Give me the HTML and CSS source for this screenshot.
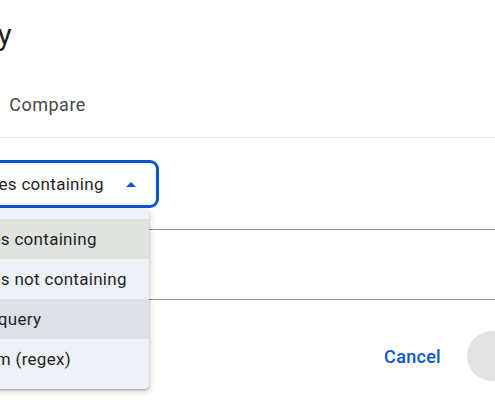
FILE: index.html
```html
<!DOCTYPE html>
<html lang="en">
<head>
<meta charset="utf-8">
<title>Query</title>
<link rel="stylesheet" href="styles.css">
</head>
<body>
<div class="dialog">
  <h1 class="title">Query</h1>
  <div class="tabs">
    <div class="tab tab-active">Filter</div>
    <div class="tab">Compare</div>
  </div>
  <div class="content">
    <div class="select-wrap">
      <div class="select">
        <span class="select-value">Queries containing</span>
        <svg class="select-arrow" width="10" height="5" viewBox="0 0 10 5"><polygon points="0,5 5,0 10,5" fill="#0b57d0"/></svg>
      </div>
      <ul class="menu">
        <li class="menu-item menu-item-selected">Queries containing</li>
        <li class="menu-item">Queries not containing</li>
        <li class="menu-item menu-item-hover">Exact query</li>
        <li class="menu-item">Custom (regex)</li>
      </ul>
    </div>
    <div class="field field-first"></div>
    <div class="field field-second"></div>
  </div>
  <div class="actions">
    <button class="btn btn-text">Cancel</button>
    <button class="btn btn-filled">Apply</button>
  </div>
</div>
</body>
</html>
```
FILE: styles.css
```css
html, body {
  margin: 0;
  padding: 0;
  background: #ffffff;
}
body {
  width: 495px;
  height: 400px;
  overflow: hidden;
  font-family: Roboto, "Liberation Sans", sans-serif;
  color: #1f1f1f;
}
.dialog {
  box-sizing: border-box;
  width: 656px;
  margin-left: -77px;
  padding: 0 24px;
}
.title {
  margin: 15px 0 0 -13px;
  font-size: 30px;
  line-height: 40px;
  font-weight: 400;
  color: #1f1f1f;
}
.tabs {
  display: flex;
  gap: 19px;
  margin: 26px -24px 0;
  padding: 0 24px 8px;
  border-bottom: 1px solid #e3e3e3;
}
.tab {
  height: 48px;
  line-height: 48px;
  font-size: 18px;
  letter-spacing: 0.5px;
  color: #444746;
}
.content {
  padding-top: 22px;
}
.select-wrap {
  position: relative;
  width: 212px;
}
.select {
  box-sizing: border-box;
  height: 48px;
  border: 3px solid #0b57d0;
  border-radius: 9px;
  display: flex;
  align-items: center;
  padding: 0 20px 0 7px;
  font-size: 17px;
  letter-spacing: 0.3px;
  color: #1f1f1f;
}
.select-value {
  flex: 1;
  white-space: nowrap;
}
.select-arrow {
  display: block;
}
.menu {
  position: absolute;
  top: calc(100% + 2px);
  left: 0;
  width: 202px;
  box-sizing: border-box;
  margin: 0;
  padding: 9px 0 10px;
  list-style: none;
  background: #eef2f8;
  border-radius: 4px;
  box-shadow: 0 1px 2px rgba(0,0,0,0.3), 0 2px 6px 2px rgba(0,0,0,0.12);
  z-index: 2;
}
.menu-item {
  height: 40px;
  line-height: 40px;
  padding: 0 3px;
  font-size: 17px;
  letter-spacing: 0.3px;
  color: #1f1f1f;
  white-space: nowrap;
}
.menu-item-selected {
  background: #e1e3e1;
}
.menu-item-hover {
  background: #dde1e7;
}
.field {
  border-bottom: 1px solid #8f9190;
}
.field-first {
  height: 21px;
}
.field-second {
  height: 69px;
}
.actions {
  display: flex;
  justify-content: flex-end;
  align-items: center;
  gap: 14px;
  margin-top: 31px;
}
.btn {
  font-family: Roboto, "Liberation Sans", sans-serif;
  border: none;
  height: 50px;
  border-radius: 25px;
  font-size: 18px;
  font-weight: 500;
  letter-spacing: 0.3px;
  cursor: pointer;
}
.btn-text {
  background: transparent;
  color: #0b57d0;
  padding: 0 12px;
}
.btn-filled {
  background: #e3e3e3;
  color: rgba(31,31,31,0.38);
  width: 88px;
  padding: 0 0 0 32px;
  text-align: left;
}
```
